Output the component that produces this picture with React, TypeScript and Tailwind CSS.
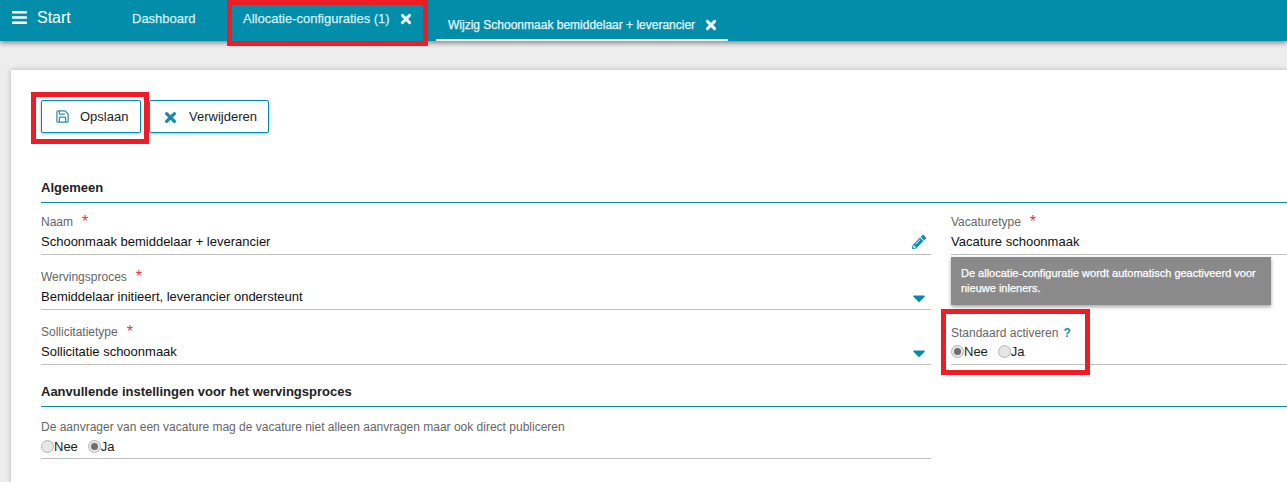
import { FaBars, FaCaretDown, FaPencilAlt } from "react-icons/fa";
import { Save } from "lucide-react";

function CloseIcon({ className }: { className: string }) {
  return (
    <svg viewBox="0 0 12 12" className={className} fill="none" stroke="currentColor" strokeWidth="3" strokeLinecap="round">
      <path d="M2.4 2.4 9.6 9.6M9.6 2.4 2.4 9.6" />
    </svg>
  );
}

function Radio({ checked, label }: { checked?: boolean; label: string }) {
  return (
    <span className="flex items-center">
      <span className="flex h-[13px] w-[13px] items-center justify-center rounded-full border border-[#b5b5b5] bg-[#e6e6e6]">
        {checked ? <span className="h-[7px] w-[7px] rounded-full bg-[#6f6f6f]" /> : null}
      </span>
      <span className="text-[13px] leading-none text-[#222]">{label}</span>
    </span>
  );
}

function Field({
  label,
  value,
  required,
  icon,
}: {
  label: string;
  value: string;
  required?: boolean;
  icon?: "edit" | "caret";
}) {
  return (
    <div className="pt-[12px] pb-[3px]">
      <div className="flex h-[14px] items-center text-xs text-[#666]">
        {label}
        {required ? <span className="ml-[9px] text-[16px] leading-none text-[#f0304a]">*</span> : null}
      </div>
      <div className="flex h-[26px] items-center justify-between border-b border-[#c0c0c0] text-[13px] text-[#111]">
        <span>{value}</span>
        {icon === "edit" ? <FaPencilAlt className="mr-[5px] text-[14px] text-[#0f8fae]" /> : null}
        {icon === "caret" ? <FaCaretDown className="mr-[2px] mt-[2px] text-[20px] text-[#028eab]" /> : null}
      </div>
    </div>
  );
}

function SectionTitle({ children, className }: { children: string; className: string }) {
  return (
    <div className={`flex items-center border-b border-[#028eab] text-[13px] font-bold text-[#222] ${className}`}>
      {children}
    </div>
  );
}

function RedBox({ className }: { className: string }) {
  return <div className={`pointer-events-none absolute border-[5px] border-[#ee1c25] ${className}`} />;
}

export default function App() {
  return (
    <div className="relative h-[482px] w-[1287px] overflow-hidden bg-[#ededed] font-['Liberation_Sans',Arial,sans-serif]">
      <header className="relative z-10 flex h-[41px] bg-[#028eab] shadow-[0_2px_5px_rgba(0,0,0,0.45)]">
        <div className="flex w-[132px] items-start pl-[11px] pt-[8px] text-white">
          <FaBars className="mt-[1px] text-[17px]" />
          <span className="ml-[9px] text-base leading-[20px]">Start</span>
        </div>
        <div className="w-[111px] pt-[11px] text-[13px] leading-[16px] text-[#d5eef3] [-webkit-text-stroke:0.25px]">Dashboard</div>
        <div className="flex w-[193px] items-start pt-[11px] text-[13px] leading-[16px] text-[#d5eef3] [-webkit-text-stroke:0.25px]">
          <span className="w-[157px] whitespace-nowrap">Allocatie-configuraties (1)</span>
          <CloseIcon className="mt-[2px] h-[12px] w-[12px] text-[#e4f3f6]" />
        </div>
        <div className="flex h-[41px] w-[292px] items-start border-b-2 border-white pl-[12px] pt-[17px] text-xs leading-[16px] text-[#e6f5f8] [-webkit-text-stroke:0.25px]">
          <span className="w-[257px] whitespace-nowrap">Wijzig Schoonmaak bemiddelaar + leverancier</span>
          <CloseIcon className="mt-[2px] h-[12px] w-[12px] shrink-0 text-[#f0f9fa]" />
        </div>
      </header>

      <main className="ml-[11px] mt-[29px] h-[420px] bg-white pl-[30px] pt-[30px] shadow-[0_0_5px_rgba(0,0,0,0.25)]">
        <div className="flex gap-[8px]">
          <button className="flex h-[33px] w-[100px] items-center rounded-[2px] border border-[#028eab] bg-white pl-[13px] text-[13px] text-[#222] shadow-[0_1px_3px_rgba(0,0,0,0.3)]">
            <Save className="h-[15px] w-[15px] text-[#2f93ad]" strokeWidth={2} />
            <span className="ml-[10px]">Opslaan</span>
          </button>
          <button className="flex h-[33px] w-[120px] items-center rounded-[2px] border border-[#028eab] bg-white pl-[14px] text-[13px] text-[#222] shadow-[0_1px_3px_rgba(0,0,0,0.3)]">
            <CloseIcon className="mt-[1px] h-[13px] w-[13px] text-[#0f8fae]" />
            <span className="ml-[12px]">Verwijderen</span>
          </button>
        </div>

        <SectionTitle className="mt-[37px] h-[33px] pt-[4px]">Algemeen</SectionTitle>

        <div className="flex gap-[20px]">
          <div className="w-[890px]">
            <Field label="Naam" value="Schoonmaak bemiddelaar + leverancier" required icon="edit" />
            <Field label="Wervingsproces" value="Bemiddelaar initieert, leverancier ondersteunt" required icon="caret" />
            <Field label="Sollicitatietype" value="Sollicitatie schoonmaak" required icon="caret" />
          </div>
          <div className="flex-1">
            <Field label="Vacaturetype" value="Vacature schoonmaak" required />
            <div className="h-[55px]" />
            <div className="h-[52px] border-b border-[#c0c0c0] pt-[12px]">
              <div className="flex h-[15px] items-center text-xs text-[#666]">
                Standaard activeren
                <span className="ml-[5px] text-[12px] font-bold text-[#0f8fae]">?</span>
              </div>
              <div className="mt-[5px] flex gap-[10px]">
                <Radio checked label="Nee" />
                <Radio label="Ja" />
              </div>
            </div>
          </div>
        </div>

        <SectionTitle className="-mt-[3px] h-[42px] pt-[12px]">Aanvullende instellingen voor het wervingsproces</SectionTitle>

        <div className="h-[52px] w-[890px] border-b border-[#c0c0c0] pt-[13px]">
          <div className="text-xs leading-[15px] text-[#666]">
            De aanvrager van een vacature mag de vacature niet alleen aanvragen maar ook direct publiceren
          </div>
          <div className="mt-[5px] flex gap-[10px]">
            <Radio label="Nee" />
            <Radio checked label="Ja" />
          </div>
        </div>
      </main>

      <div className="absolute left-[951px] top-[257px] h-[48px] w-[320px] bg-[#8a8a8a] px-[10px] pt-[9px] text-[11px] leading-[15px] text-white shadow-[0_2px_4px_rgba(0,0,0,0.35)] [-webkit-text-stroke:0.25px]">
        De allocatie-configuratie wordt automatisch geactiveerd voor nieuwe inleners.
      </div>

      <RedBox className="left-[227px] top-0 z-20 h-[46px] w-[201px]" />
      <RedBox className="left-[31px] top-[92px] h-[52px] w-[118px]" />
      <RedBox className="left-[941px] top-[309px] h-[66px] w-[149px]" />
    </div>
  );
}
